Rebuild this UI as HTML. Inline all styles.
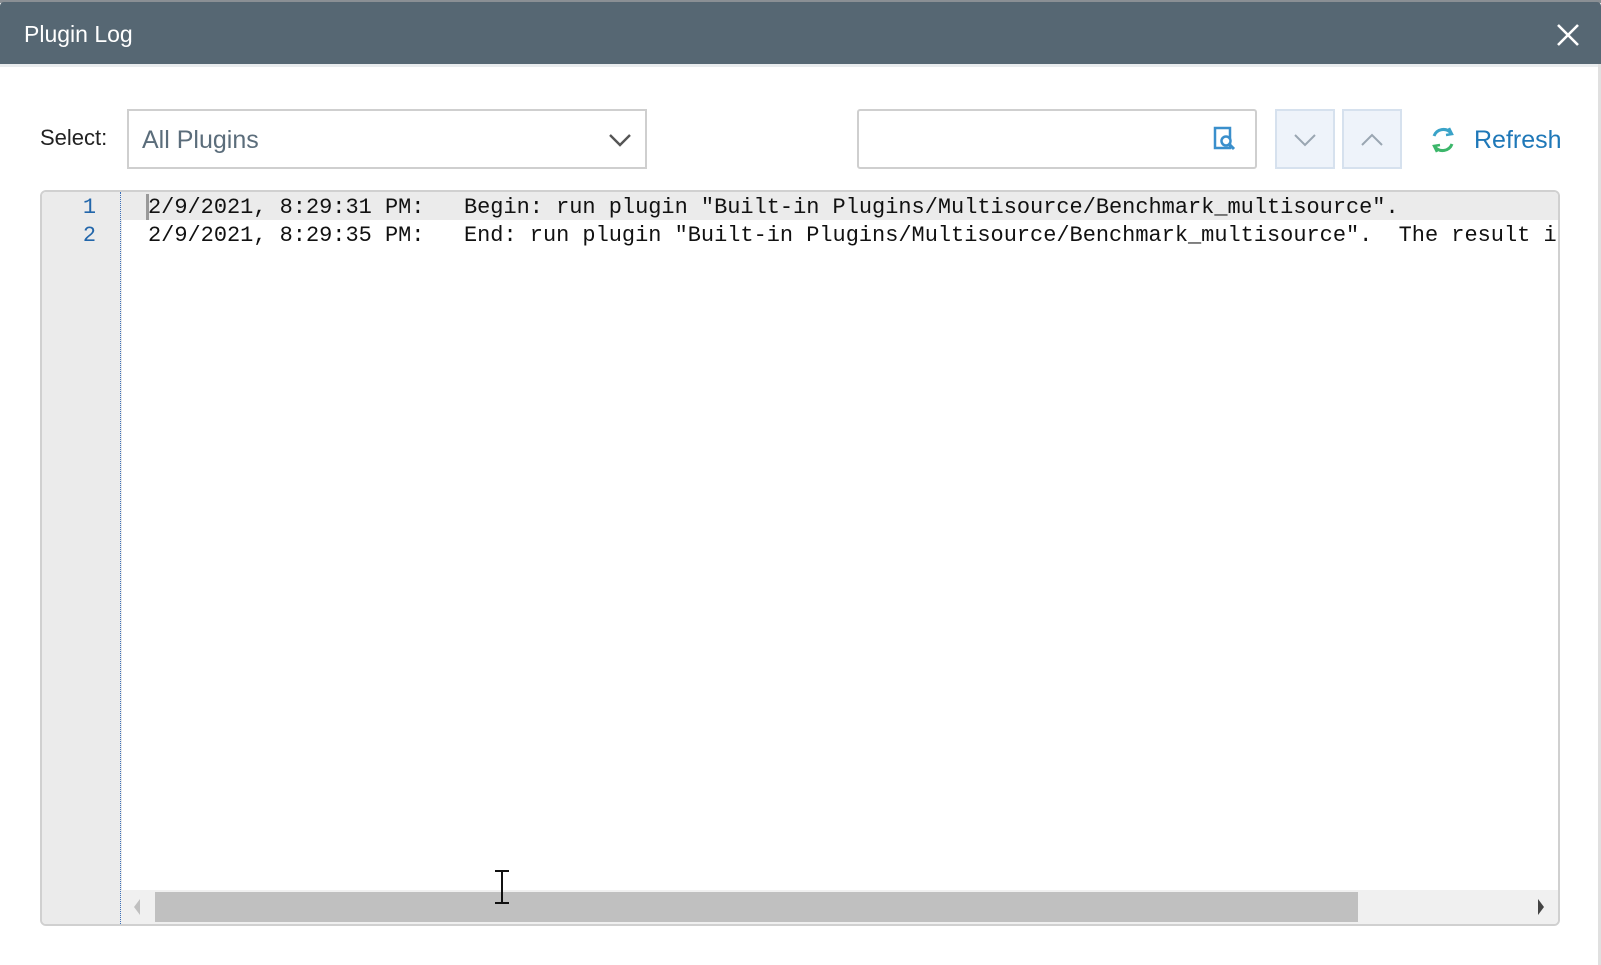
<!DOCTYPE html>
<html><head><meta charset="utf-8"><style>
*{margin:0;padding:0;box-sizing:border-box}
body{width:1601px;height:965px;background:#fff;position:relative;overflow:hidden;font-family:"Liberation Sans",sans-serif}
.abs{position:absolute}
#top{left:0;top:0;width:1601px;height:3px;background:#8a8f94}
#hdr{left:0;top:2px;width:1601px;height:62px;background:#566773;border-top-left-radius:4px;border-top-right-radius:4px}
#hdr span{position:absolute;left:24px;top:19px;color:#fff;font-size:23px}
#hdrb{left:0;top:64px;width:1601px;height:3px;background:#e9ecee}
.dd{border:2px solid #cfcfcf;background:#fff}
.btn{background:#eef3fa;border:2px solid #d6e1ee}
.mono{font-family:"Liberation Mono",monospace;font-size:21.95px;white-space:pre;color:#111}
</style></head><body>
<div class="abs" id="top"></div>
<div class="abs" id="hdr"><span>Plugin Log</span>
<svg class="abs" style="left:1556px;top:21px" width="24" height="24" viewBox="0 0 24 24"><path d="M2 2L22 22M22 2L2 22" stroke="#fff" stroke-width="2.6"/></svg></div>
<div class="abs" id="hdrb"></div>
<div class="abs" style="left:1598px;top:64px;width:3px;height:901px;background:#e0e0e0"></div>

<div class="abs" style="left:40px;top:125px;font-size:22px;color:#222">Select:</div>
<div class="abs dd" style="left:127px;top:109px;width:520px;height:60px"></div>
<div class="abs" style="left:142px;top:126px;font-size:25px;color:#5b6d7b">All Plugins</div>
<svg class="abs" style="left:608px;top:132px" width="24" height="16" viewBox="0 0 24 16"><path d="M2 3L12 13L22 3" stroke="#555" stroke-width="2.4" fill="none"/></svg>

<div class="abs dd" style="left:857px;top:109px;width:400px;height:60px;border-radius:3px"></div>
<svg class="abs" style="left:1212px;top:126px" width="28" height="26" viewBox="0 0 28 26"><rect x="3" y="2" width="15" height="20" fill="none" stroke="#3a8fcc" stroke-width="2.5"/><circle cx="14" cy="15" r="4.5" fill="#fff" stroke="#3a8fcc" stroke-width="2.5"/><path d="M17 18L22 23" stroke="#3a8fcc" stroke-width="3"/></svg>

<div class="abs btn" style="left:1275px;top:109px;width:60px;height:60px"></div>
<svg class="abs" style="left:1293px;top:133px" width="24" height="14" viewBox="0 0 24 14"><path d="M2 2L12 12L22 2" stroke="#9aa6b2" stroke-width="2" fill="none"/></svg>
<div class="abs btn" style="left:1342px;top:109px;width:60px;height:60px"></div>
<svg class="abs" style="left:1360px;top:133px" width="24" height="14" viewBox="0 0 24 14"><path d="M2 12L12 2L22 12" stroke="#9aa6b2" stroke-width="2" fill="none"/></svg>

<svg class="abs" style="left:1429px;top:126px" width="28" height="28" viewBox="0 0 28 28"><path d="M5 10A10 10 0 0 1 22 7" stroke="#3aa3c8" stroke-width="3" fill="none"/><path d="M20 2L23 8L17 9" stroke="#3aa3c8" stroke-width="2.5" fill="none"/><path d="M23 18A10 10 0 0 1 6 21" stroke="#3cb66a" stroke-width="3" fill="none"/><path d="M8 26L5 20L11 19" stroke="#3cb66a" stroke-width="2.5" fill="none"/></svg>
<div class="abs" style="left:1474px;top:126px;font-size:25px;color:#1f78b8">Refresh</div>

<div class="abs" style="left:40px;top:190px;width:1520px;height:736px;border:2px solid #d0d0d0;border-radius:6px;overflow:hidden;background:#fff">
 <div class="abs" style="left:0;top:0;width:80px;height:736px;background:#ebebeb"></div>
 <div class="abs" style="left:78px;top:0;height:736px;border-left:1px dotted #3c6fb8"></div>
 <div class="abs" style="left:80px;top:0;width:1440px;height:28px;background:#ebebeb"></div>
 <div class="abs" style="left:104px;top:2px;width:3px;height:26px;background:#999"></div>
 <div class="abs mono" style="left:0;top:2px;width:54px;text-align:right;color:#2266aa;line-height:28px">1<br>2</div>
 <div class="abs mono" style="left:106px;top:2px;line-height:28px">2/9/2021, 8:29:31 PM:   Begin: run plugin "Built-in Plugins/Multisource/Benchmark_multisource".
2/9/2021, 8:29:35 PM:   End: run plugin "Built-in Plugins/Multisource/Benchmark_multisource".  The result is</div>
 <div class="abs" style="left:79px;top:698px;width:1440px;height:40px;background:#f0f0f0"></div>
 <div class="abs" style="left:113px;top:700px;width:1203px;height:30px;background:#c0c0c0"></div>
 <svg class="abs" style="left:90px;top:706px" width="10" height="18"><path d="M8 1L2 9L8 17Z" fill="#c0c0c0"/></svg>
 <svg class="abs" style="left:1494px;top:706px" width="10" height="18"><path d="M2 1L8 9L2 17Z" fill="#444"/></svg>
</div>
<svg class="abs" style="left:492px;top:869px" width="20" height="36"><path d="M3 2H17M3 34H17M10 2V34" stroke="#111" stroke-width="2"/></svg>
</body></html>
